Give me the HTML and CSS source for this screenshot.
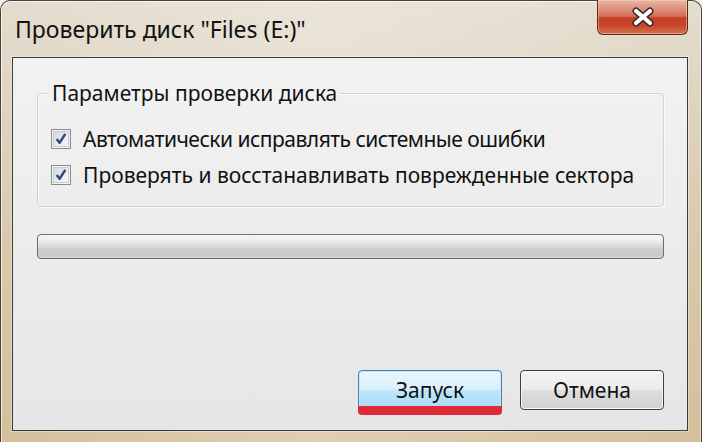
FILE: index.html
```html
<!DOCTYPE html>
<html lang="ru">
<head>
<meta charset="utf-8">
<title>Проверить диск</title>
<link rel="stylesheet" href="styles.css">
</head>
<body>
<div class="window">
  <div class="titlebar">
    <div class="title">Проверить диск "Files (E:)"</div>
    <div class="close">
      <svg width="26" height="20" viewBox="0 0 26 20">
        <path d="M6 4 L20 16 M20 4 L6 16" stroke="#3a2a26" stroke-width="7" stroke-linecap="round" fill="none"/>
        <path d="M6 4 L20 16 M20 4 L6 16" stroke="#ffffff" stroke-width="4.2" stroke-linecap="round" fill="none"/>
      </svg>
    </div>
  </div>
  <div class="content">
    <fieldset class="group">
      <legend class="legend">Параметры проверки диска</legend>
      <label class="row">
        <span class="check">
          <svg width="14" height="14" viewBox="0 0 13 13"><path d="M2.5 6.5 L5.2 10 L10.5 1.8" stroke="#34477f" stroke-width="2.3" fill="none" stroke-linejoin="round"/></svg>
        </span>
        <span class="label label-first">Автоматически исправлять системные ошибки</span>
      </label>
      <label class="row">
        <span class="check">
          <svg width="14" height="14" viewBox="0 0 13 13"><path d="M2.5 6.5 L5.2 10 L10.5 1.8" stroke="#34477f" stroke-width="2.3" fill="none" stroke-linejoin="round"/></svg>
        </span>
        <span class="label">Проверять и восстанавливать поврежденные сектора</span>
      </label>
    </fieldset>
    <div class="progress"></div>
    <div class="buttons">
      <button class="btn btn-default">Запуск</button>
      <button class="btn">Отмена</button>
    </div>
  </div>
</div>
</body>
</html>
```
FILE: styles.css
```css
html, body {
  margin: 0;
  padding: 0;
  background: #f4f4f4;
}
body {
  width: 702px;
  height: 442px;
  overflow: hidden;
  font-family: "Noto Sans", "Open Sans", sans-serif;
  color: #111;
}
.window {
  width: 702px;
  height: 442px;
  box-sizing: border-box;
  border: 1px solid #4a4234;
  border-bottom: none;
  border-radius: 10px 10px 0 0;
  background: linear-gradient(90deg, rgba(255,255,255,0) 0%, rgba(255,255,255,0.25) 45%, rgba(255,255,255,0.15) 70%, rgba(255,255,255,0) 100%),
              linear-gradient(180deg, #e4dccd 0%, #dfd5c3 20%, #d8c8aa 60%, #d3bf9b 100%);
  box-shadow: inset 1px 1px 0 rgba(255,255,255,0.7), inset -1px 0 0 rgba(255,255,255,0.5);
  display: flex;
  flex-direction: column;
  padding: 0 13px 11px 11px;
}
.titlebar {
  height: 56px;
  display: flex;
  justify-content: space-between;
  align-items: flex-start;
}
.title {
  align-self: center;
  padding-left: 3px;
  font-size: 23px;
  line-height: 28px;
  margin-top: -1px;
  color: #111;
}
.close {
  width: 91px;
  height: 35px;
  margin-top: -1px;
  box-sizing: border-box;
  border: 1px solid #5a2a20;
  border-top: none;
  border-radius: 0 0 6px 6px;
  background: linear-gradient(180deg, #eab4a4 0%, #dc8c77 30%, #d46a52 48%, #c43f27 52%, #c8452b 75%, #d8704f 100%);
  box-shadow: inset 0 0 0 1px rgba(255,220,200,0.45);
  display: flex;
  align-items: center;
  justify-content: center;
}
.content {
  flex: 1;
  border: 1px solid #3c3a36;
  box-shadow: 0 0 0 1px rgba(255,255,255,0.35);
  background: linear-gradient(180deg, #f2f2f2 0%, #ececec 50%, #e6e6e6 100%);
  display: flex;
  flex-direction: column;
  padding: 23px 23px 20px 24px;
}
.group {
  margin: 0;
  padding: 16px 12px 13px 13px;
  border: 1px solid #d2d2d2;
  border-radius: 4px;
  box-shadow: inset 1px 1px 0 #fafafa, 1px 1px 0 #fafafa;
  min-width: 0;
}
.legend {
  margin-left: -2px;
  padding: 0 3px;
  font-size: 21px;
  line-height: 24px;
}
.row {
  display: flex;
  align-items: center;
  height: 36px;
  gap: 12px;
}
.check {
  width: 20px;
  height: 20px;
  box-sizing: border-box;
  border: 1px solid #8c8c8c;
  background: linear-gradient(135deg, #cfd3da 0%, #eceef2 60%, #f8f8f8 100%);
  box-shadow: inset 0 0 0 1px #f2f2f2, inset 0 0 0 2px #c9ccd3;
  display: flex;
  align-items: center;
  justify-content: center;
  flex: none;
}
.label {
  font-size: 21px;
  line-height: 26px;
  white-space: nowrap;
}
.label-first {
  letter-spacing: -0.5px;
}
.progress {
  margin-top: 27px;
  height: 25px;
  box-sizing: border-box;
  border: 1px solid #6b6b6b;
  border-radius: 4px;
  background: linear-gradient(180deg, #e6e6e6 0%, #f4f4f4 12%, #e2e2e2 40%, #cfcfcf 60%, #c8c8c8 85%, #d6d6d6 100%);
  box-shadow: inset 0 1px 0 #fbfbfb;
}
.buttons {
  margin-top: auto;
  display: flex;
  justify-content: flex-end;
  gap: 18px;
}
.btn {
  position: relative;
  width: 144px;
  height: 40px;
  box-sizing: border-box;
  border: 1px solid #3f3f3f;
  border-radius: 4px;
  background: linear-gradient(180deg, #f4f4f4 0%, #ececec 48%, #dddddd 52%, #d2d2d2 100%);
  box-shadow: inset 0 0 0 1px #fbfbfb;
  font-family: "Noto Sans", "Open Sans", sans-serif;
  font-size: 21px;
  color: #111;
  padding: 0;
}
.btn-default {
  border-color: #3c7fb1;
  background: linear-gradient(180deg, #eaf6fd 0%, #d9f0fc 48%, #bee6fd 52%, #a7d9f5 100%);
  box-shadow: inset 0 0 0 1px #c2ecfc;
}
.btn-default::after {
  content: "";
  position: absolute;
  left: -1px;
  right: -1px;
  top: 35px;
  height: 9px;
  background: #de2a36;
  border-radius: 0 0 4px 4px;
}
```
